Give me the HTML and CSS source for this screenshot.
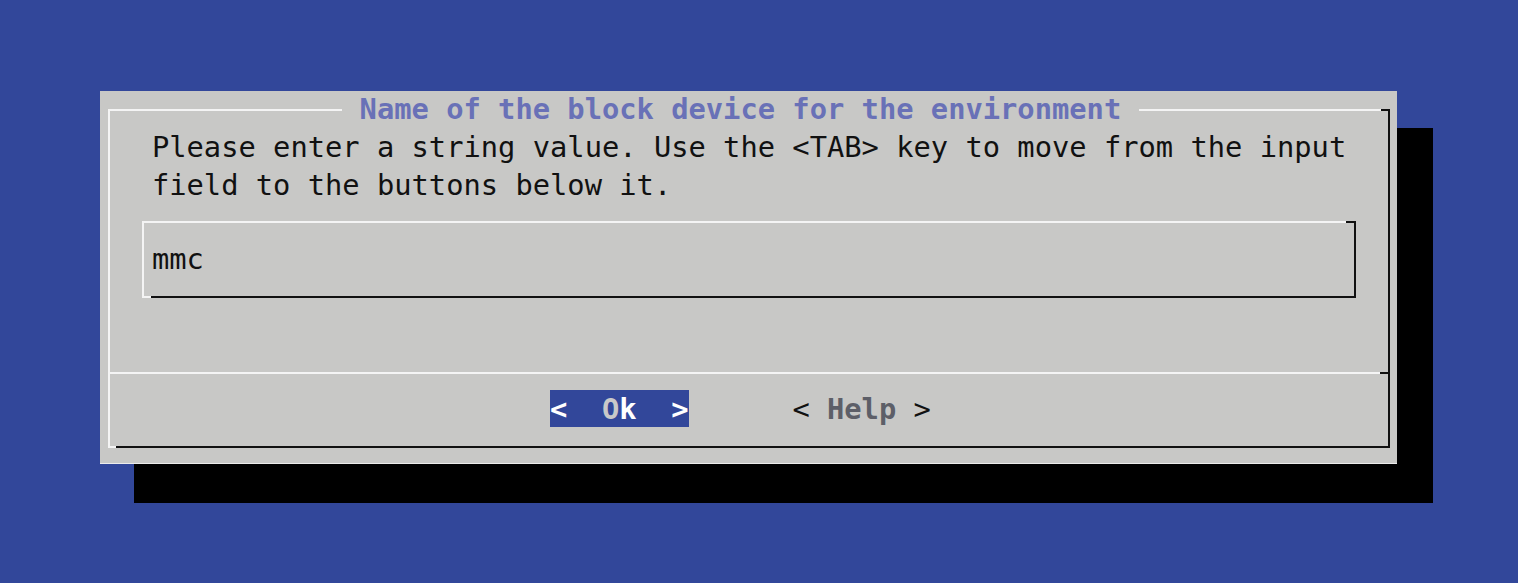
FILE: index.html
```html
<!DOCTYPE html>
<html>
<head>
<meta charset="utf-8">
<title>Name of the block device for the environment</title>
<link rel="stylesheet" href="styles.css">
</head>
<body>
<div class="screen">
  <div class="dialog">
    <div class="frame">
      <div class="title-row"><span class="title"> Name of the block device for the environment </span></div>
      <div class="prompt">
        <div class="line">Please enter a string value. Use the &lt;TAB&gt; key to move from the input</div>
        <div class="line">field to the buttons below it.</div>
      </div>
      <div class="input"><span class="value">mmc</span></div>
      <div class="separator"></div>
      <div class="buttons">
        <span class="btn active"><span class="arrow">&lt;</span>  <span class="hot">O</span><span class="lbl">k</span>  <span class="arrow">&gt;</span></span>
        <span class="btn"><span class="arrow">&lt;</span> <span class="lbl">Help</span> <span class="arrow">&gt;</span></span>
      </div>
    </div>
  </div>
</div>
</body>
</html>
```

FILE: styles.css
```css
html, body {
  margin: 0;
  height: 100%;
}

body {
  background: #32479a;
  font-family: "DejaVu Sans Mono", monospace;
  font-size: 28.75px;
  line-height: 37.3px;
  color: #111;
  overflow: hidden;
}

.screen {
  display: flex;
  align-items: flex-start;
  padding: 91px 0 0 100px;
}

.dialog {
  width: 1297px;
  height: 373px;
  box-sizing: border-box;
  padding: 18px 7px 16px 8px;
  background: #c8c8c6;
  box-shadow: inset 0 -1px 0 #ececec, 35px 38px 0 1px #000;
  display: flex;
  flex-direction: column;
}

.frame {
  flex: 1;
  min-height: 0;
  position: relative;
  display: flex;
  flex-direction: column;
  border: 2px solid;
  border-color: #f4f4f4 #111 #111 #f4f4f4;
}

.frame::before {
  content: "";
  position: absolute;
  top: -2px;
  right: -2px;
  width: 9px;
  height: 2px;
  background: #111;
}

.frame::after {
  content: "";
  position: absolute;
  bottom: -2px;
  left: -2px;
  width: 8px;
  height: 2px;
  background: #f4f4f4;
}

.title-row {
  display: flex;
  margin-top: -20px;
  height: 37.3px;
  padding-left: calc(14ch - 10px);
}

.title {
  white-space: pre;
  background: #c8c8c6;
  color: #6971b7;
  font-weight: bold;
}

.prompt {
  padding-left: calc(3ch - 10px);
  padding-top: 1px;
}

.line {
  white-space: pre;
  height: 37.3px;
}

.input {
  position: relative;
  margin: 17px 32px 0 32px;
  height: 77px;
  flex: none;
  box-sizing: border-box;
  padding: 18px 0 0 8px;
  border: 2px solid;
  border-color: #f4f4f4 #111 #111 #f4f4f4;
}

.input::before {
  content: "";
  position: absolute;
  top: -2px;
  right: -2px;
  width: 10px;
  height: 2px;
  background: #111;
}

.input::after {
  content: "";
  position: absolute;
  bottom: -2px;
  left: -2px;
  width: 9px;
  height: 2px;
  background: #f4f4f4;
}

.separator {
  position: relative;
  flex: none;
  margin-top: 74px;
  height: 2px;
  background: #f4f4f4;
}

.separator::after {
  content: "";
  position: absolute;
  top: 0;
  right: 0;
  width: 8px;
  height: 2px;
  background: #111;
}

.buttons {
  display: flex;
  gap: 6ch;
  flex: none;
  margin-top: 15.7px;
  height: 37.3px;
  padding-left: calc(26ch - 10px);
}

.btn {
  white-space: pre;
  height: 37.3px;
  line-height: 38px;
}

.btn .lbl {
  font-weight: bold;
  color: #5d5f68;
}

.btn.active {
  background: #32479a;
}

.btn.active .arrow {
  color: #fff;
  font-weight: bold;
}

.btn.active .hot {
  color: #c9c9c9;
  font-weight: bold;
}

.btn.active .lbl {
  color: #fff;
}
```
